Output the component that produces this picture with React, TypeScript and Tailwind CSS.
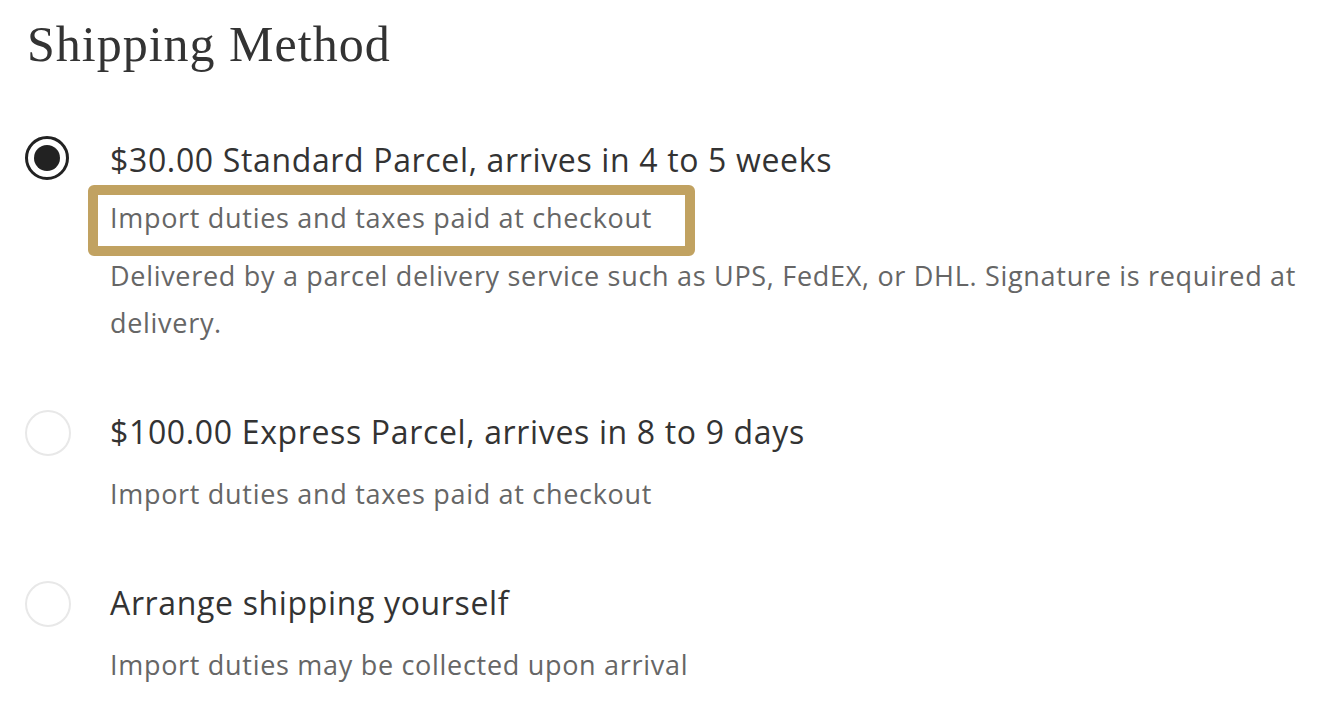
import React from 'react'

type Option = {
  title: string
  lines: string[]
  selected?: boolean
}

const options: Option[] = [
  {
    title: '$30.00 Standard Parcel, arrives in 4 to 5 weeks',
    lines: [
      'Import duties and taxes paid at checkout',
      'Delivered by a parcel delivery service such as UPS, FedEX, or DHL. Signature is required at delivery.',
    ],
    selected: true,
  },
  {
    title: '$100.00 Express Parcel, arrives in 8 to 9 days',
    lines: ['Import duties and taxes paid at checkout'],
  },
  {
    title: 'Arrange shipping yourself',
    lines: ['Import duties may be collected upon arrival'],
  },
]

function Radio({ selected }: { selected?: boolean }) {
  if (selected) {
    return (
      <div className="w-[44px] h-[44px] rounded-full border-[3px] border-[#222] flex items-center justify-center">
        <div className="w-[26px] h-[26px] rounded-full bg-[#222]" />
      </div>
    )
  }
  return <div className="w-[46px] h-[46px] mt-[2px] rounded-full border-2 border-[#e8e8e8]" />
}

export default function App() {
  return (
    <div className="bg-white w-[1344px] h-[716px] overflow-hidden pl-[25px] pt-[12px] font-['Open_Sans',sans-serif]">
      <h1 className="font-['Liberation_Serif',serif] text-[50px] leading-[64px] text-[#333] tracking-[1px] pl-[2px]">
        Shipping Method
      </h1>
      <div className="mt-[60px] flex flex-col gap-[62px]">
        {options.map((o, i) => (
          <div key={i} className="flex">
            <div className="w-[85px] shrink-0">
              <Radio selected={o.selected} />
            </div>
            <div className="flex flex-col w-[1225px]">
              <div className="text-[32px] leading-[48px] text-[#333] tracking-[0.65px]">{o.title}</div>
              <div className={i === 0 ? 'flex flex-col gap-[11px] mt-[10px]' : 'flex flex-col gap-[11px] mt-[14px]'}>
                {o.lines.map((l, j) => (
                  <div key={j} className="relative text-[27px] leading-[47px] text-[#666] tracking-[0.7px]">
                    {i === 0 && j === 0 && (
                      <div className="absolute left-[-22px] top-[-9px] w-[607px] h-[71px] border-[10px] border-[#c1a261] rounded-[6px]" />
                    )}
                    {l}
                  </div>
                ))}
              </div>
            </div>
          </div>
        ))}
      </div>
    </div>
  )
}
